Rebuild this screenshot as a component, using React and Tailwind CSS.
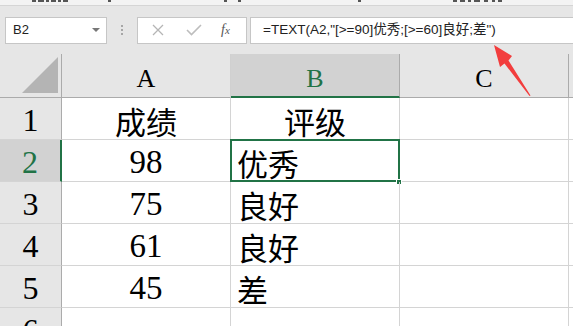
import React from 'react';

const SERIF = { fontFamily: '"Liberation Serif", "Times New Roman", serif' };
const CJK = { fontFamily: '"Noto Sans CJK SC", sans-serif' };

// bits of ribbon glyphs peeking in at the top edge
const RIBBON = [
  { x: 32, w: 4 }, { x: 38, w: 6 }, { x: 46, w: 3 }, { x: 51, w: 5 }, { x: 58, w: 3 }, { x: 63, w: 5 },
  { x: 108, w: 3 },
  { x: 224, w: 3 }, { x: 238, w: 3 },
  { x: 358, w: 3 },
  { x: 453, w: 4 }, { x: 460, w: 5 }, { x: 468, w: 3 }, { x: 474, w: 6 }, { x: 484, w: 4 }, { x: 492, w: 3 }, { x: 498, w: 4 },
];

const DATA = [
  { n: '1', a: '成绩', b: '评级', bCenter: true },
  { n: '2', a: '98', b: '优秀', selected: true },
  { n: '3', a: '75', b: '良好' },
  { n: '4', a: '61', b: '良好' },
  { n: '5', a: '45', b: '差' },
  { n: '6', a: '', b: '' },
];

function CellText({ value }) {
  if (!value) return null;
  if (/^[0-9]+$/.test(value)) {
    return (
      <span className="text-[33px] leading-none text-black" style={SERIF}>
        {value}
      </span>
    );
  }
  return (
    <span className="text-[31px] leading-none text-black" style={CJK}>
      {value}
    </span>
  );
}

function Row({ row }) {
  const sel = row.selected;
  return (
    <div className="flex h-[42px]">
      <div
        className={`w-[62px] shrink-0 flex items-center justify-center border-b border-b-[#d4d4d4] ${
          sel ? 'bg-[#d2d2d2] border-r-2 border-r-[#217346]' : 'bg-[#e6e6e6] border-r border-r-[#ababab]'
        }`}
      >
        <span
          className={`text-[32px] leading-none pt-[3px] ${sel ? 'text-[#217346]' : 'text-black'}`}
          style={SERIF}
        >
          {row.n}
        </span>
      </div>
      <div className="w-[169px] shrink-0 flex items-center justify-center border-r border-b border-[#d4d4d4] pt-[3px]">
        <CellText value={row.a} />
      </div>
      <div
        className={`relative w-[169px] shrink-0 flex items-center border-r border-b border-[#d4d4d4] pt-[3px] ${
          row.bCenter ? 'justify-center' : 'justify-start pl-[6px]'
        }`}
      >
        <CellText value={row.b} />
        {sel && (
          <>
            <div className="absolute -top-[1px] -left-[1px] w-[170px] h-[43px] border-2 border-[#217346]" />
            <div className="absolute -right-[3px] -bottom-[4px] w-[6px] h-[6px] bg-[#217346] border border-white" />
          </>
        )}
      </div>
      <div className="w-[169px] shrink-0 border-r border-b border-[#d4d4d4]" />
      <div className="flex-1 border-b border-[#d4d4d4]" />
    </div>
  );
}

export default function App() {
  return (
    <div className="relative w-[573px] h-[326px] overflow-hidden bg-white select-none">
      {/* ribbon bottom edge */}
      <div className="relative h-[6px] bg-[#f3f3f3] border-b border-[#d5d5d5]">
        {RIBBON.map((r) => (
          <span
            key={r.x}
            className="absolute top-0 h-[2px] bg-[#555]"
            style={{ left: r.x, width: r.w }}
          />
        ))}
      </div>

      {/* formula bar */}
      <div className="flex items-center h-[48px] bg-[#e6e6e6] pl-[5px]">
        <div className="w-[102px] h-[27px] bg-white border border-[#c6c6c6] flex items-center justify-between pl-[7px] pr-[6px]">
          <span className="text-[13px] text-[#222]" style={{ fontFamily: '"Liberation Sans", Arial, sans-serif' }}>
            B2
          </span>
          <span className="w-0 h-0 border-l-[4px] border-r-[4px] border-t-[4px] border-l-transparent border-r-transparent border-t-[#777]" />
        </div>
        <div className="w-[30px] flex flex-col items-center gap-[2px]">
          <span className="w-[2px] h-[2px] bg-[#a6a6a6]" />
          <span className="w-[2px] h-[2px] bg-[#a6a6a6]" />
          <span className="w-[2px] h-[2px] bg-[#a6a6a6]" />
        </div>
        <div className="w-[110px] h-[27px] bg-white border border-[#c6c6c6] flex items-center pl-[14px]">
          <svg width="12" height="12" viewBox="0 0 12 12" className="shrink-0">
            <path d="M1 1 L11 11 M11 1 L1 11" stroke="#b5b5b5" strokeWidth="1.3" fill="none" />
          </svg>
          <svg width="16" height="12" viewBox="0 0 16 12" className="ml-[22px] shrink-0">
            <path d="M1 6 L5.5 10.5 L15 1" stroke="#bdbdbd" strokeWidth="1.6" fill="none" />
          </svg>
          <span className="ml-[19px] text-[14px] italic text-[#555] leading-none" style={SERIF}>
            f<span className="text-[11px]">x</span>
          </span>
        </div>
        <div className="flex-1 h-[27px] ml-[3px] bg-white border border-[#c6c6c6] border-r-0 flex items-center pl-[12px]">
          <span
            className="text-[13.5px] text-[#222] whitespace-nowrap"
            style={{ fontFamily: '"Liberation Sans", Arial, "Noto Sans CJK SC", sans-serif' }}
          >
            =TEXT(A2,"[&gt;=90]优秀;[&gt;=60]良好;差")
          </span>
        </div>
      </div>

      {/* column headers */}
      <div className="flex h-[44px] bg-[#e6e6e6]">
        <div className="w-[62px] shrink-0 border-r border-b border-[#ababab] flex items-end justify-end pr-[3px] pb-[4px]">
          <svg width="36" height="36" viewBox="0 0 36 36">
            <polygon points="36,0 36,36 0,36" fill="#b4b4b4" />
          </svg>
        </div>
        <div className="w-[169px] shrink-0 flex items-center justify-center border-r border-r-[#d0d0d0] border-b border-b-[#ababab] pt-[6px]">
          <span className="text-[26px] leading-none text-black" style={SERIF}>A</span>
        </div>
        <div className="w-[169px] shrink-0 flex items-center justify-center bg-[#d2d2d2] border-r border-r-[#ababab] border-b-2 border-b-[#217346] pt-[7px]">
          <span className="text-[26px] leading-none text-[#217346]" style={SERIF}>B</span>
        </div>
        <div className="w-[169px] shrink-0 flex items-center justify-center border-r border-r-[#ababab] border-b border-b-[#ababab] pt-[6px]">
          <span className="text-[26px] leading-none text-black" style={SERIF}>C</span>
        </div>
        <div className="flex-1 border-b border-[#ababab]" />
      </div>

      {DATA.map((row) => (
        <Row key={row.n} row={row} />
      ))}

      {/* red annotation arrow */}
      <svg className="absolute left-0 top-0 pointer-events-none" width="573" height="326">
        <polygon
          points="494,45 512,56 508.5,60.5 530.5,95.5 529.5,96 504.5,63.5 500,67"
          fill="#f23d3d"
        />
      </svg>
    </div>
  );
}
